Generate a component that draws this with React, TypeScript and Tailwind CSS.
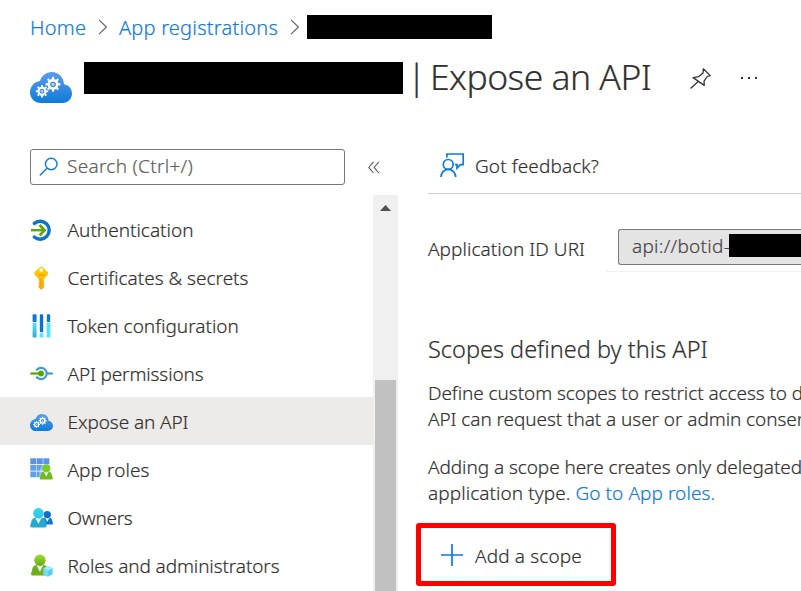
import type { ReactNode } from "react";

function Chevron() {
  return (
    <svg width="10" height="16" viewBox="0 0 10 16" fill="none" stroke="#605e5c" strokeWidth="1.1">
      <path d="M1 0.8L8.4 8L1 15.2" />
    </svg>
  );
}

const TEETH = [0, 45, 90, 135, 180, 225, 270, 315];

function Gear({ x, y, r }: { x: number; y: number; r: number }) {
  return (
    <g transform={`translate(${x} ${y}) scale(${r})`}>
      <circle r="0.55" fill="none" stroke="#fff" strokeWidth="0.38" />
      {TEETH.map((a) => (
        <rect key={a} x="-0.15" y="-1" width="0.3" height="0.36" fill="#fff" transform={`rotate(${a})`} />
      ))}
      <circle r="0.36" fill="#3c87dd" />
      <circle r="0.22" fill="#b5d3f3" />
    </g>
  );
}

function CloudGears({ id, width, height }: { id: string; width: number; height: number }) {
  return (
    <svg width={width} height={height} viewBox="0 0 42 31" preserveAspectRatio="none">
      <defs>
        <linearGradient id={id} x1="0" y1="0" x2="0" y2="1">
          <stop offset="0" stopColor="#5a9dee" />
          <stop offset="1" stopColor="#0f7ad8" />
        </linearGradient>
      </defs>
      <path
        fill={`url(#${id})`}
        d="M11 31C4.8 31 0 26.4 0 20.3C0 14.4 4.3 9.6 10 8.9C11.6 3.6 16.2 0 21.8 0C28.4 0 33.6 5 34 12.2C38.6 12.9 42 16.7 42 21.5C42 27 37.8 31 32.3 31Z"
      />
      <Gear x={12} y={19.3} r={6.2} />
      <Gear x={23} y={12.3} r={7.4} />
    </svg>
  );
}

function AuthIcon() {
  return (
    <svg width="24" height="24" viewBox="0 0 24 24" fill="none">
      <path d="M4.3 5.4A9 9 0 1 1 4.3 19" stroke="#0d73c9" strokeWidth="3.4" strokeLinecap="round" />
      <path d="M1 12.2H14.5" stroke="#5ea50e" strokeWidth="2.4" />
      <path d="M9.6 7L14.6 12.2L9.6 17.4" stroke="#5ea50e" strokeWidth="2.7" />
    </svg>
  );
}

function KeyIcon() {
  return (
    <svg width="24" height="24" viewBox="0 0 24 24">
      <defs>
        <linearGradient id="key" x1="0" y1="0" x2="0" y2="1">
          <stop offset="0" stopColor="#ffd400" />
          <stop offset="1" stopColor="#f8a51b" />
        </linearGradient>
      </defs>
      <path
        fill="url(#key)"
        d="M10 .9Q11.2 0 12.4 .9L17.8 6.1Q19 7.4 17.8 8.7L14 12.7V21.2L11.8 23.4Q11.2 23.8 10.6 23.4L8.5 21.2V19.8L9.5 18.8L8.5 17.8V16.7L9.5 15.6L8.5 14.6V12.7L4.7 8.7Q3.4 7.4 4.7 6.1Z"
      />
      <circle cx="11.2" cy="4" r="1.8" fill="#fff" />
      <path d="M7.6 8.9H14.8" stroke="#ff9300" strokeWidth="1" />
      <path d="M10.7 13V20" stroke="#ff9300" strokeWidth=".8" />
    </svg>
  );
}

function TokenIcon() {
  return (
    <svg width="24" height="24" viewBox="0 0 24 24">
      <defs>
        <linearGradient id="tok" x1="0" y1="0" x2="0" y2="1">
          <stop offset="0" stopColor="#50e6ff" />
          <stop offset="1" stopColor="#32a9cf" />
        </linearGradient>
      </defs>
      <rect x="2.6" y=".2" width="4" height="7.9" rx=".8" fill="#0f78d4" />
      <rect x="2.6" y="8.8" width="4" height="14.8" rx=".8" fill="url(#tok)" />
      <rect x="9.8" y=".2" width="3.4" height="18" rx=".8" fill="#0f70cc" />
      <rect x="9.6" y="19.2" width="3.8" height="4.4" rx=".8" fill="#50e6ff" />
      <rect x="16.8" y=".2" width="3.4" height="7.9" rx=".8" fill="#0f78d4" />
      <rect x="16.6" y="8.8" width="3.8" height="14.8" rx=".8" fill="#50e6ff" />
    </svg>
  );
}

function PermissionsIcon() {
  return (
    <svg width="24" height="24" viewBox="0 0 24 24" fill="none">
      <path d="M6.3 8.3A5.7 5.7 0 1 1 6.3 14.7" stroke="#3c9dd0" strokeWidth="2.2" />
      <path d="M17 11.5H22.8" stroke="#3c9dd0" strokeWidth="2.2" />
      <path d="M.4 11.5H11" stroke="#57a300" strokeWidth="2.2" />
      <circle cx="11" cy="11.5" r="2.9" fill="#57a300" />
    </svg>
  );
}

function Gradients() {
  return (
    <defs>
      <linearGradient id="grn" x1="0" y1="0" x2="0" y2="1">
        <stop offset="0" stopColor="#9be02f" />
        <stop offset="1" stopColor="#6aa81c" />
      </linearGradient>
      <linearGradient id="cyn" x1="0" y1="0" x2="0" y2="1">
        <stop offset="0" stopColor="#35d6f3" />
        <stop offset="1" stopColor="#2fc3e3" />
      </linearGradient>
    </defs>
  );
}

/** Head and shoulders with a notched collar; drawn in a 17×20 box. */
function Person({ x, y, s, head, body }: { x: number; y: number; s: number; head: string; body: string }) {
  return (
    <g transform={`translate(${x} ${y}) scale(${s})`}>
      <path d="M1.5 20Q0 20 0 18.4L1.6 12.6Q2.4 10 5 10H12Q14.6 10 15.4 12.6L17 18.4Q17 20 15.5 20Z" fill={body} />
      <path d="M5.2 10H11.8L8.5 16.5Z" fill="#e4f6e8" />
      <circle cx="8.5" cy="5.4" r="5.4" fill={head} />
    </g>
  );
}

function RolesIcon() {
  return (
    <svg width="24" height="24" viewBox="0 0 24 24">
      <Gradients />
      {[0, 6.6, 13.2].map((y, r) =>
        [0, 6.5, 13].map((x, c) =>
          r === 2 && c === 2 ? null : (
            <rect key={`${x}-${y}`} x={x + 0.3} y={y + 0.3} width="6" height="5.8" fill={r === 0 ? "#5c92e6" : "#5ea0ef"} />
          ),
        ),
      )}
      <path d="M9.2 19.2V14L12 6H20V19Z" fill="#fff" opacity=".35" />
      <Person x={9.8} y={6.2} s={0.76} head="#7bcc26" body="#72b81f" />
    </svg>
  );
}

function OwnersIcon() {
  return (
    <svg width="24" height="24" viewBox="0 0 24 24">
      <Gradients />
      <Person x={11.6} y={5} s={0.67} head="#0f6fc8" body="#0f78d4" />
      <Person x={0.2} y={2} s={0.97} head="url(#cyn)" body="#27a9cf" />
    </svg>
  );
}

function AdminsIcon() {
  return (
    <svg width="24" height="24" viewBox="0 0 24 24">
      <Gradients />
      <Person x={1} y={0.6} s={1.05} head="url(#grn)" body="#6fad1d" />
      <path d="M18 12.2L22.6 14.3V20.2L18 22.8L13.4 20.2V14.3Z" fill="#5ccbee" />
      <path d="M18 12.2L22.6 14.3L18 16.8L13.4 14.3Z" fill="#9cebff" />
      <path d="M18 16.8V22.8L13.4 20.2V14.3Z" fill="#75dcf8" />
    </svg>
  );
}

type Item = { label: string; icon: ReactNode; tracking: string; active?: boolean };

const ITEMS: Item[] = [
  { label: "Authentication", icon: <AuthIcon />, tracking: "tracking-normal" },
  { label: "Certificates & secrets", icon: <KeyIcon />, tracking: "tracking-normal" },
  { label: "Token configuration", icon: <TokenIcon />, tracking: "tracking-normal" },
  { label: "API permissions", icon: <PermissionsIcon />, tracking: "tracking-[-0.14px]" },
  { label: "Expose an API", icon: <CloudGears id="cloudSmall" width={23} height={17} />, tracking: "tracking-[-0.09px]", active: true },
  { label: "App roles", icon: <RolesIcon />, tracking: "tracking-[0.07px]" },
  { label: "Owners", icon: <OwnersIcon />, tracking: "tracking-[-0.3px]" },
  { label: "Roles and administrators", icon: <AdminsIcon />, tracking: "tracking-[-0.11px]" },
];

function Header() {
  return (
    <header className="h-[149px] pl-[30px]">
      <nav className="flex h-[54px] items-center text-[20px] text-[#0f7bd6]">
        <span className="w-[68px] pt-0.5 tracking-[0.25px]">Home</span>
        <Chevron />
        <span className="ml-[11px] w-[171px] pt-0.5 tracking-[0.21px]">App registrations</span>
        <Chevron />
        <span className="ml-[7px] h-6 w-[185px] bg-black" />
      </nav>
      <div className="flex h-[48px] items-center">
        <div className="pt-[18px]">
          <CloudGears id="cloudLarge" width={42} height={31} />
        </div>
        <span className="ml-3 h-8 w-[319px] bg-black" />
        <h1 className="ml-1 flex pb-1 text-[35.5px] leading-[48px]">
          <span className="w-[23px]">|</span>
          <span className="w-[259px] tracking-[-0.53px]">Expose an API</span>
        </h1>
        <svg className="mt-0.5" width="24" height="24" viewBox="0 0 24 24" fill="none" stroke="#323130" strokeWidth="1.3" strokeLinejoin="round">
          <path d="M14.3 1.8L21.3 8.6L18.3 9.5L15.1 14.2L15.2 18.4L4.1 10.6L9.6 9.7L14 6.1Z" />
          <path d="M9.2 14.6L1.5 21.6" />
        </svg>
        <div className="ml-[28px] flex gap-[5px]">
          <i className="size-0.5 bg-[#323130]" />
          <i className="size-0.5 bg-[#323130]" />
          <i className="size-0.5 bg-[#323130]" />
        </div>
      </div>
    </header>
  );
}

function Sidebar() {
  return (
    <aside className="flex w-[398px] shrink-0 flex-col">
      <div className="flex h-9 items-center pl-[30px]">
        <div className="flex h-9 w-[315px] items-center rounded-[3px] border border-[#7a7876] pl-2">
          <svg width="20" height="20" viewBox="0 0 20 20" fill="none" stroke="#0f7bd6" strokeWidth="1.4">
            <circle cx="12.2" cy="7" r="5.8" />
            <path d="M8 11.2L.8 18.6" />
          </svg>
          <span className="ml-[8px] pb-0.5 tracking-[0.29px] text-[#605e5c]">Search (Ctrl+/)</span>
        </div>
        <svg className="ml-[23px]" width="12" height="13" viewBox="0 0 12 13" fill="none" stroke="#605e5c" strokeWidth="1.1">
          <path d="M5.5 .8L.8 6.4L5.5 12M10.8 .8L6.1 6.4L10.8 12" />
        </svg>
      </div>
      <div className="mt-2.5 flex min-h-0 flex-1">
        <ul className="w-[373px] pt-2.5">
          {ITEMS.map((it) => (
            <li key={it.label} className={`flex h-12 items-center pl-[30px] ${it.active ? "bg-[#edebe9]" : ""}`}>
              <span className="flex w-[37.5px] items-center pt-0.5">{it.icon}</span>
              <span className={`pt-px ${it.tracking}`}>{it.label}</span>
            </li>
          ))}
        </ul>
        <div className="flex w-[25px] flex-col items-center bg-[#f0f0f0] pt-2.5">
          <svg className="shrink-0" width="12" height="6" viewBox="0 0 12 6">
            <path d="M5.5 0L11 6H0Z" fill="#505050" />
          </svg>
          <div className="mt-[169px] w-[21px] flex-1 bg-[#c1c1c1]" />
        </div>
      </div>
    </aside>
  );
}

function Content() {
  return (
    <main className="min-w-0 flex-1 overflow-hidden whitespace-nowrap pl-[30px]">
      <div className="flex h-[45px] items-start border-b border-[#cfcecd] pl-3 pt-1">
        <svg width="25" height="25" viewBox="0 0 25 25" fill="none" stroke="#0f7bd6" strokeWidth="1.7">
          <path d="M6.9 4.6V1H23.2V11.7H20.4L17 15.2V11.7H15" />
          <circle cx="8.2" cy="11.4" r="4.9" />
          <path d="M1 24C1 19.6 4.2 16.4 8.2 16.4S15.7 19.6 15.7 24" />
        </svg>
        <span className="ml-2.5 leading-[26px] tracking-[0.1px]">Got feedback?</span>
      </div>
      <div className="flex h-[78px] pt-[35px]">
        <span className="w-[178px] pt-[7px] leading-[26px] tracking-[0.05px]">Application ID URI</span>
        <div className="h-[43px] flex-1 border-b border-[#f1f0ef] pl-3">
          <div className="flex h-9 rounded-l-[3px] border border-r-0 border-[#7a7876] bg-[#e4e4e4] pl-[13px] pt-1">
            <span className="w-[97px] leading-[24px] tracking-[0.27px] text-[#484644]">api://botid-</span>
            <span className="h-[23px] flex-1 bg-black" />
          </div>
        </div>
      </div>
      <h2 className="mt-[61px] text-[23.5px] leading-[32px]">Scopes defined by this API</h2>
      <p className="mt-[15px] leading-[26px] tracking-[-0.07px]">
        Define custom scopes to restrict access to d
        <br />
        API can request that a user or admin consen
      </p>
      <p className="mt-[22px] leading-[26px]">
        <span className="tracking-[-0.07px]">Adding a scope here creates only delegated</span>
        <br />
        <span className="tracking-[0.07px]">
          application type. <a className="text-[#0f7bd6]">Go to App roles.</a>
        </span>
      </p>
      <button className="-ml-3 mt-[17px] flex h-[63px] w-[200px] items-center rounded-[3px] border-[5px] border-[#fe0000] pl-5">
        <svg width="22" height="22" viewBox="0 0 22 22" fill="none" stroke="#0f7bd6" strokeWidth="1.7">
          <path d="M11 0V22M0 11H22" />
        </svg>
        <span className="ml-3 pt-0.5 tracking-[0.14px]">Add a scope</span>
      </button>
    </main>
  );
}

export default function App() {
  return (
    <div className="flex h-[591px] w-[801px] flex-col overflow-hidden bg-white font-['Noto_Sans',sans-serif] text-[19px] font-light leading-[26px] text-[#323130] [-webkit-text-stroke:0.2px]">
      <Header />
      <div className="flex min-h-0 flex-1">
        <Sidebar />
        <Content />
      </div>
    </div>
  );
}
